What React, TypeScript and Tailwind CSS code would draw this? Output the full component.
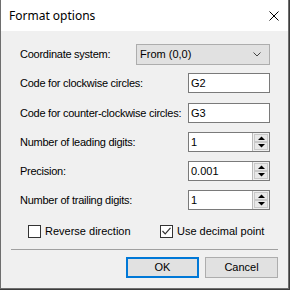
import React from 'react';

const ui = { fontFamily: '"Liberation Sans", Arial, sans-serif' };

const Spin: React.FC<{ value: string }> = ({ value }) => (
  <div className="flex h-[20px] w-[82px] shrink-0 border border-[#7a7a7a] bg-white">
    <div className="flex flex-1 items-center pl-[2px] text-[11px] text-black">{value}</div>
    <div className="flex w-[17px] flex-col border-l border-[#b9b9b9] bg-[#f0f0f0] p-[1px]">
      <div className="flex flex-1 items-center justify-center border border-[#c9c9c9] bg-[#e8e8e8]">
        <svg width="7" height="4" viewBox="0 0 7 4"><path d="M0 4h7L3.5 0.5z" fill="#000" /></svg>
      </div>
      <div className="flex flex-1 items-center justify-center border border-[#c9c9c9] bg-[#e8e8e8]">
        <svg width="7" height="4" viewBox="0 0 7 4"><path d="M0 0h7L3.5 3.5z" fill="#000" /></svg>
      </div>
    </div>
  </div>
);

const Row: React.FC<{ label: string; mt: string; children: React.ReactNode }> = ({ label, mt, children }) => (
  <div className={`flex items-center justify-between ${mt}`}>
    <span className="whitespace-nowrap text-[11px] tracking-[-0.25px] text-black">{label}</span>
    {children}
  </div>
);

const App: React.FC = () => {
  return (
    <div className="h-[290px] w-[290px] bg-[#3c3c3c]" style={ui}>
      <div className="flex h-[289px] w-[289px] flex-col border-x border-b border-[#6e6e6e] bg-[#f0f0f0]">
        {/* Title bar */}
        <div className="flex h-[31px] shrink-0 items-center justify-between bg-white pl-[8px] pr-[9px]">
          <span className="text-[12px] text-black" style={{ fontFamily: '"Noto Sans", "Liberation Sans", sans-serif' }}>
            Format options
          </span>
          <svg width="10" height="10" viewBox="0 0 10 10">
            <path d="M0.5 0.5L9.5 9.5M9.5 0.5L0.5 9.5" stroke="#000" strokeWidth="1" />
          </svg>
        </div>

        {/* Body */}
        <div className="flex flex-col pl-[19px] pr-[18px] pt-[13px]">
          <Row label="Coordinate system:" mt="mt-0">
            <div className="flex h-[21px] w-[134px] shrink-0 items-center justify-between border border-[#adadad] bg-[#e1e1e1] pl-[3px] pr-[8px] text-[11px]">
              <span>From (0,0)</span>
              <svg width="8" height="5" viewBox="0 0 8 5">
                <path d="M0.5 0.5L4 4L7.5 0.5" stroke="#444" fill="none" strokeWidth="1" />
              </svg>
            </div>
          </Row>
          <Row label="Code for clockwise circles:" mt="mt-[8px]">
            <div className="flex h-[20px] w-[82px] shrink-0 items-center border border-[#7a7a7a] bg-white pl-[2px] text-[11px]">G2</div>
          </Row>
          <Row label="Code for counter-clockwise circles:" mt="mt-[10px]">
            <div className="flex h-[20px] w-[82px] shrink-0 items-center border border-[#7a7a7a] bg-white pl-[2px] text-[11px]">G3</div>
          </Row>
          <Row label="Number of leading digits:" mt="mt-[9px]">
            <Spin value="1" />
          </Row>
          <Row label="Precision:" mt="mt-[9px]">
            <Spin value="0.001" />
          </Row>
          <Row label="Number of trailing digits:" mt="mt-[9px]">
            <Spin value="1" />
          </Row>

          {/* Checkboxes */}
          <div className="mt-[13px] flex items-center pl-[8px] text-[11px]">
            <div className="flex w-[132px] items-center gap-[4px]">
              <div className="h-[13px] w-[13px] border border-[#333] bg-white" />
              <span>Reverse direction</span>
            </div>
            <div className="flex items-center gap-[4px]">
              <div className="flex h-[13px] w-[13px] items-center justify-center border border-[#333] bg-white">
                <svg width="9" height="8" viewBox="0 0 9 8">
                  <path d="M0.5 4L3.2 6.8L8.5 0.8" stroke="#333" fill="none" strokeWidth="1.2" />
                </svg>
              </div>
              <span>Use decimal point</span>
            </div>
          </div>
        </div>

        {/* Separator */}
        <div className="mx-[10px] mt-[9px] h-[1px] shrink-0 bg-[#a0a0a0]" />

        {/* Buttons */}
        <div className="mt-[7px] flex justify-end gap-[6px] pr-[10px] text-[11px]">
          <button className="flex h-[21px] w-[73px] items-center justify-center border-2 border-[#0078d7] bg-[#e1e1e1]">OK</button>
          <button className="flex h-[21px] w-[73px] items-center justify-center border border-[#adadad] bg-[#e1e1e1]">Cancel</button>
        </div>
      </div>
    </div>
  );
};

export default App;
